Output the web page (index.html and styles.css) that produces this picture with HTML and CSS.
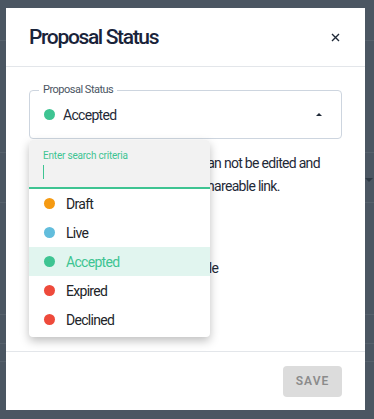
FILE: index.html
```html
<!DOCTYPE html>
<html lang="en">
<head>
    <meta charset="UTF-8">
    <meta name="viewport" content="width=device-width, initial-scale=1.0">
    <title>Proposal Status</title>
    <link rel="stylesheet" href="styles.css">
</head>
<body>
    <!-- dimmed page behind the dialog -->
    <div class="page">
        <div class="page-row r1"></div>
        <div class="page-row r2"></div>
        <div class="page-row r3"><span class="page-caret"></span></div>
        <div class="page-row r4"></div>
        <div class="page-row r5"></div>
        <div class="page-row r6"></div>
    </div>

    <div class="modal">
        <div class="modal-header">
            <h2 class="modal-title">Proposal Status</h2>
            <button class="close">
                <svg width="9" height="9" viewBox="0 0 9 9"><path d="M1 1L8 8M8 1L1 8" stroke="#1f2937" stroke-width="1.4"/></svg>
            </button>
        </div>

        <div class="modal-body">
            <div class="field">
                <span class="legend">Proposal Status</span>
                <span class="dot accepted"></span>
                <span class="field-value">Accepted</span>
                <span class="arrow-up"></span>
            </div>

            <p class="note">Once a proposal is accepted, it can not be edited and<br>will only be viewed through the shareable link.</p>
            <p class="note extra">This proposal is no longer editable</p>

            <div class="dropdown">
                <div class="search">
                    <label>Enter search criteria</label>
                    <span class="cursor"></span>
                </div>
                <ul class="options">
                    <li><span class="dot draft"></span>Draft</li>
                    <li><span class="dot live"></span>Live</li>
                    <li class="selected"><span class="dot accepted"></span>Accepted</li>
                    <li><span class="dot expired"></span>Expired</li>
                    <li><span class="dot expired"></span>Declined</li>
                </ul>
            </div>
        </div>

        <div class="modal-footer">
            <button class="save" disabled>SAVE</button>
        </div>
    </div>
</body>
</html>
```

FILE: styles.css
```css
/* page */
body {
    margin: 0;
    background: #4b5662;
    font-family: Roboto, "Liberation Sans", sans-serif;
    color: #1f2937;
    height: 419px;
    overflow: hidden;
    position: relative;
}

/* rows of the page behind the overlay */
.page-row {
    border-bottom: 1px solid #56616c;
    position: relative;
}

.r1 { height: 40px; }
.r2 { height: 111px; }
.r3 { height: 49px; }
.r4 { height: 111px; }
.r5 { height: 28px; }
.r6 { height: 17px; }

.page-caret {
    position: absolute;
    right: 1px;
    top: 25px;
    border-left: 4px solid transparent;
    border-right: 4px solid transparent;
    border-top: 4px solid #2e3944;
}

/* dialog */
.modal {
    position: absolute;
    left: 6px;
    top: 8px;
    width: 359px;
    height: 402px;
    background: #ffffff;
    display: flex;
    flex-direction: column;
}

.modal-header {
    height: 58px;
    padding: 0 23px;
    display: flex;
    align-items: center;
    justify-content: space-between;
    border-bottom: 1px solid #e3e6ea;
}

.modal-title {
    margin: 0;
    font-size: 21px;
    font-weight: 500;
    letter-spacing: -1.35px;
    color: #19233a;
}

.close {
    border: none;
    background: none;
    padding: 0;
    margin-right: 2px;
    display: flex;
    cursor: pointer;
}

.modal-body {
    flex: 1;
    padding: 23px 23px 0;
    position: relative;
}

/* outlined select */
.field {
    position: relative;
    height: 47px;
    border: 1px solid #cdd5df;
    border-radius: 4px;
    padding: 0 14px;
    display: flex;
    align-items: center;
    gap: 8px;
}

.legend {
    position: absolute;
    left: 9px;
    top: -8px;
    padding: 0 4px;
    background: #ffffff;
    font-size: 11px;
    letter-spacing: -0.5px;
    color: #4b5563;
}

.field-value {
    font-size: 14px;
    letter-spacing: -0.7px;
    color: #1f2937;
}

.arrow-up {
    margin-left: auto;
    margin-right: 5px;
    border-left: 3px solid transparent;
    border-right: 3px solid transparent;
    border-bottom: 3px solid #1f2937;
}

.dot {
    width: 11px;
    height: 11px;
    border-radius: 50%;
    flex-shrink: 0;
    display: inline-block;
}

.draft { background: #f59a12; }
.live { background: #62bddc; }
.accepted { background: #3ec492; }
.expired { background: #ee4a3b; }

.note {
    margin: 13px 0 0;
    font-size: 14px;
    line-height: 23px;
    letter-spacing: -0.7px;
    color: #1f2937;
}

.note.extra {
    margin-top: 59px;
}

/* open dropdown */
.dropdown {
    position: absolute;
    left: 23px;
    top: 73px;
    width: 181px;
    background: #ffffff;
    border-radius: 4px;
    box-shadow: 0 4px 10px rgba(0, 0, 0, 0.25);
    overflow: hidden;
}

.search {
    background: #f2f2f2;
    height: 47px;
    padding: 0 14px;
    border-bottom: 2px solid #3ec492;
    display: flex;
    flex-direction: column;
}

.search label {
    margin-top: 10px;
    font-size: 10px;
    color: #3ec492;
    letter-spacing: -0.2px;
}

.cursor {
    margin-top: 4px;
    width: 1px;
    height: 14px;
    background: #3ec492;
}

.options {
    list-style: none;
    margin: 0;
    padding: 0 0 3px;
}

.options li {
    height: 29px;
    display: flex;
    align-items: center;
    gap: 11px;
    padding-left: 15px;
    font-size: 14px;
    letter-spacing: -0.7px;
    color: #222428;
}

.options li.selected {
    background: #e1f5ef;
    color: #3ec492;
}

.modal-footer {
    height: 58px;
    border-top: 1px solid #e3e6ea;
    display: flex;
    align-items: center;
    justify-content: flex-end;
    padding: 0 23px;
}

.save {
    width: 59px;
    height: 31px;
    border: none;
    border-radius: 4px;
    background: #dcdcdc;
    color: #8b8b8b;
    font-family: Roboto, "Liberation Sans", sans-serif;
    font-size: 12px;
    font-weight: 600;
    letter-spacing: 1px;
}
```
